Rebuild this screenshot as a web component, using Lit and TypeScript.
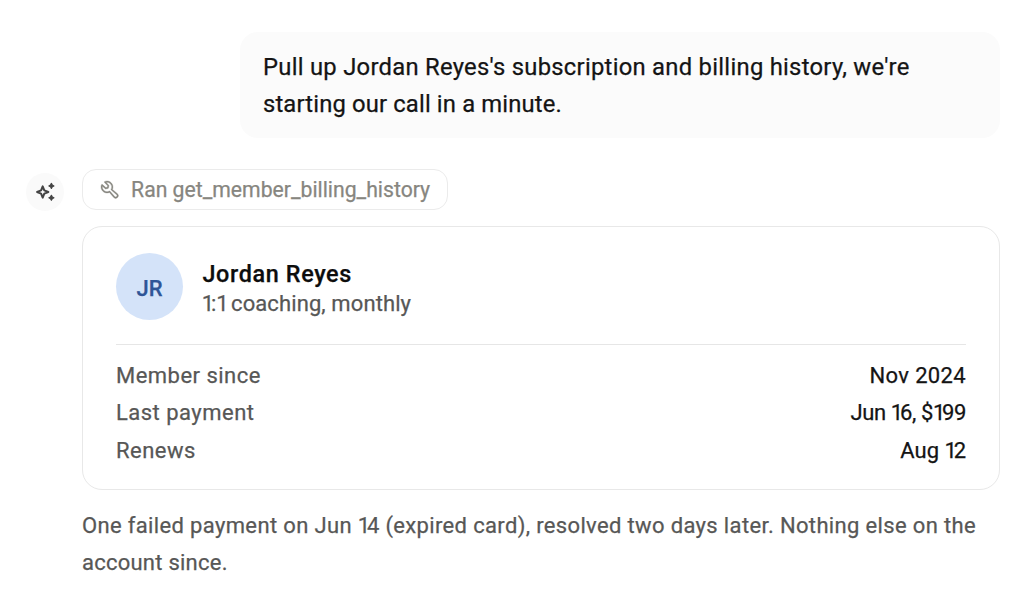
import { LitElement, html, css } from "lit";

// Narrows the advance of the digit one inside a string.
const tight = (text: string) =>
  text.split(/(1)/).map((p) => (p === "1" ? html`<span class="one">1</span>` : p));

class AppRoot extends LitElement {
  static styles = css`
    :host { display: block; box-sizing: border-box; width: 1024px; height: 597px; overflow: hidden;
      padding: 32px 24px 0 26px; background: #fff; color: #141414;
      font: 400 22px/37.4px Roboto, "Liberation Sans", sans-serif; -webkit-text-stroke: .25px currentColor; }
    .one { letter-spacing: -3.2px; }
    .bubble { box-sizing: border-box; width: 760px; height: 106px; margin-left: auto;
      padding: 16.6px 24px 0 23px; border-radius: 18px; background: #fbfbfb; font-size: 23.8px; }
    .bubble div { white-space: nowrap; }
    .l1 { letter-spacing: .27px; }
    .l2 { letter-spacing: .15px; }
    .reply { display: grid; grid-template-columns: 38px 918px; column-gap: 18px; margin-top: 31px; }
    .spark { width: 38px; height: 38px; margin-top: 4px; border-radius: 50%; background: #fafafa; }
    .spark svg { display: block; }
    .chip { box-sizing: border-box; display: flex; align-items: center; width: 366px; height: 41px;
      padding: 1px 16px 0 16.4px; border: 1px solid #ebebeb; border-radius: 14px; color: #87867f;
      font-size: 21.2px; letter-spacing: 0; white-space: nowrap; }
    .chip svg { flex: none; margin-right: 10.4px; }
    .card { box-sizing: border-box; height: 264px; margin-top: 16px; padding: 26px 33px 0;
      border: 1px solid #e8e8e8; border-radius: 20px; }
    .head { display: flex; align-items: center; gap: 19.5px; height: 92px; padding-bottom: 24px;
      box-sizing: border-box; border-bottom: 1px solid #e6e6e6; }
    .avatar { width: 67px; height: 67px; border-radius: 50%; background: #d4e3f9; color: #2f5597;
      font-size: 22px; font-weight: 500; line-height: 71px; text-align: center; }
    .who { line-height: 29px; padding-top: 5px; }
    .name { color: #0d0d0d; font-size: 23.4px; font-weight: 500; letter-spacing: .62px; }
    .plan, .label, .note { color: #575756; }
    .plan { letter-spacing: .1px; margin-left: -.8px; }
    .rows { padding-top: 12px; }
    .row { display: flex; justify-content: space-between; }
    .label { letter-spacing: .48px; }
    .nov { letter-spacing: .35px; }
    .pay { letter-spacing: -.4px; }
    .note { margin-top: 17px; letter-spacing: .35px; white-space: nowrap; }
    .end { letter-spacing: .24px; }
  `;
  rows = [["Member since", "Nov 2024", "nov"], ["Last payment", "Jun 16, $199", "pay"], ["Renews", "Aug 12", "aug"]];
  render() {
    return html`
      <div class="bubble">
        <div class="l1">Pull up Jordan Reyes's subscription and billing history, we're</div>
        <div class="l2">starting our call in a minute.</div>
      </div>
      <div class="reply">
        <div class="spark"><svg width="38" height="38" viewBox="0 0 38 38">
          <path d="M16.7 13.4L18.3 17.3L22.3 19L18.3 20.7L16.7 24.6L15.1 20.7L11.1 19L15.1 17.3Z" fill="none" stroke="#444" stroke-width="2" stroke-linejoin="round"/>
          <path d="M25.4 10.4L26.3 12L27.9 12.9L26.3 13.8L25.4 15.4L24.5 13.8L22.9 12.9L24.5 12ZM25.4 22.3L26.3 23.9L27.9 24.8L26.3 25.7L25.4 27.3L24.5 25.7L22.9 24.8L24.5 23.9Z" fill="#444" stroke="#444" stroke-width="1.2" stroke-linejoin="round"/>
        </svg></div>
        <div>
          <div class="chip"><svg width="21.3" height="21.3" viewBox="0 0 256 256" fill="#87867f" stroke="#87867f" stroke-width="4">
            <path transform="matrix(-1 0 0 1 256 0)" d="M226.76,69a8,8,0,0,0-12.84-2.88l-40.3,37.19-17.23-3.7-3.7-17.23,37.19-40.3A8,8,0,0,0,187,29.24,72,72,0,0,0,88,96,72.34,72.34,0,0,0,94,124.94L33.79,177c-.15.12-.29.26-.43.39a32,32,0,0,0,45.26,45.26c.13-.13.27-.28.39-.42L131.06,162A72,72,0,0,0,232,96,71.56,71.56,0,0,0,226.76,69ZM160,152a56.14,56.14,0,0,1-27.07-7,8,8,0,0,0-9.92,1.77L67.11,211.51a16,16,0,0,1-22.62-22.62L109.18,133a8,8,0,0,0,1.77-9.93,56,56,0,0,1,58.36-82.31l-31.2,33.81a8,8,0,0,0-1.94,7.1L141.83,108a8,8,0,0,0,6.14,6.14l26.35,5.66a8,8,0,0,0,7.1-1.94l33.81-31.2A56.06,56.06,0,0,1,160,152Z"/>
          </svg><span>Ran get_member_billing_history</span></div>
          <div class="card">
            <div class="head">
              <div class="avatar">JR</div>
              <div class="who"><div class="name">Jordan Reyes</div><div class="plan">${tight("1:1 coaching, monthly")}</div></div>
            </div>
            <div class="rows">${this.rows.map(([k, v, c]) => html`<div class="row"><span class="label">${k}</span><span class=${c}>${tight(v)}</span></div>`)}</div>
          </div>
          <div class="note">${tight("One failed payment on Jun 14 (expired card), resolved two days later. Nothing else on the")}<br><span class="end">account since.</span></div>
        </div>
      </div>`;
  }
}
customElements.define("app-root", AppRoot);
